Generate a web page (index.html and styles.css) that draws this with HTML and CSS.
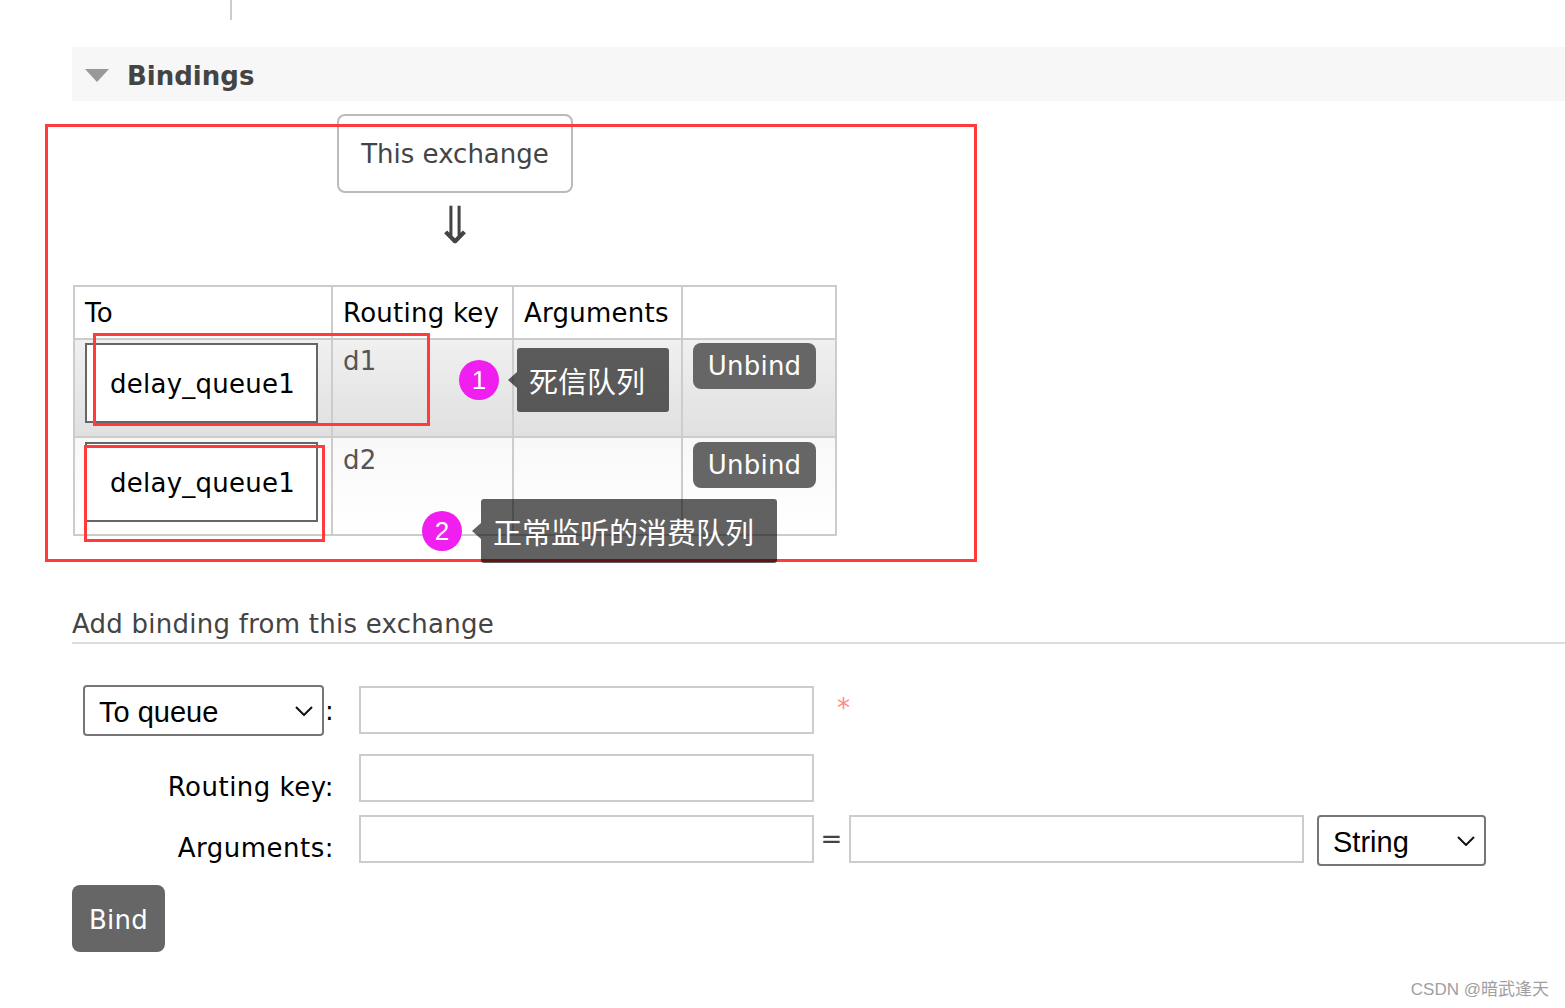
FILE: index.html
```html
<!DOCTYPE html>
<html lang="en">
<head>
<meta charset="utf-8">
<title>Bindings</title>
<link rel="stylesheet" href="styles.css">
</head>
<body>
<div class="topline"></div>
<div class="page">
  <div class="sec-head"><span class="tri"></span><h2>Bindings</h2></div>
  <div class="diagram">
    <div class="exch">This exchange</div>
    <div class="arrow">⇓</div>
    <table class="bt">
      <colgroup><col class="c1"><col class="c2"><col class="c3"><col class="c4"></colgroup>
      <thead>
        <tr><th>To</th><th>Routing key</th><th>Arguments</th><th></th></tr>
      </thead>
      <tbody>
        <tr class="odd">
          <td><div class="qbox">delay_queue1</div></td>
          <td class="rk">d1</td>
          <td></td>
          <td><button class="btn unbind" type="button">Unbind</button></td>
        </tr>
        <tr class="even">
          <td><div class="qbox">delay_queue1</div></td>
          <td class="rk">d2</td>
          <td></td>
          <td><button class="btn unbind" type="button">Unbind</button></td>
        </tr>
      </tbody>
    </table>
  </div>

  <h3 class="add">Add binding from this exchange</h3>

  <form class="form">
    <div class="frow r1">
      <div class="lbl lbl-sel">
        <span class="selwrap sel-q">
          <select class="sel"><option>To queue</option><option>To exchange</option></select>
          <svg class="chev" width="18" height="10" viewBox="0 0 18 10"><path d="M1 1 L9 9 L17 1" fill="none" stroke="#111" stroke-width="2"/></svg>
        </span><span class="colon">:</span>
      </div>
      <input class="inp" type="text">
      <span class="mand">*</span>
    </div>
    <div class="frow r2">
      <label class="lbl lbl-txt">Routing key:</label>
      <input class="inp" type="text">
    </div>
    <div class="frow r3">
      <label class="lbl lbl-txt lbl-args">Arguments:</label>
      <input class="inp" type="text">
      <span class="eq">=</span>
      <input class="inp" type="text">
      <span class="selwrap sel-s">
        <select class="sel"><option>String</option><option>Number</option><option>Boolean</option></select>
        <svg class="chev" width="18" height="10" viewBox="0 0 18 10"><path d="M1 1 L9 9 L17 1" fill="none" stroke="#111" stroke-width="2"/></svg>
      </span>
    </div>
    <button class="btn bind" type="button">Bind</button>
  </form>
</div>

<div class="ann rect rect-a"></div>
<div class="ann rect rect-b"></div>
<div class="ann rect rect-c"></div>
<div class="ann dot dot-1">1</div>
<div class="ann tip tip-1">死信队列</div>
<div class="ann dot dot-2">2</div>
<div class="ann tip tip-2">正常监听的消费队列</div>

<div class="watermark">CSDN @暗武逢天</div>
</body>
</html>
```
FILE: styles.css
```css
* { box-sizing: border-box; }
html, body { margin: 0; padding: 0; background: #fff; }
body {
  position: relative;
  width: 1565px;
  height: 1008px;
  overflow: hidden;
  font-family: "DejaVu Sans", Verdana, sans-serif;
  font-size: 26px;
  line-height: 32px;
  letter-spacing: 0.25px;
  color: #444;
}

.topline { margin-left: 230px; width: 2px; height: 20px; background: #ccc; }

.page { padding-left: 72px; padding-top: 27px; }

.sec-head {
  height: 54px;
  background: #f7f7f7;
  display: flex;
  align-items: center;
}
.tri {
  width: 0; height: 0;
  border-left: 12.5px solid transparent;
  border-right: 12.5px solid transparent;
  border-top: 13px solid #999;
  margin-left: 13px;
  margin-right: 18px;
  margin-top: 2px;
}
.sec-head h2 { margin: 0; padding-top: 3px; font-size: 26px; font-weight: bold; color: #444; letter-spacing: 0; }

.diagram {
  display: inline-flex;
  flex-direction: column;
  align-items: center;
  margin-top: 13px;
  margin-left: 1px;
}
.exch {
  width: 236px;
  height: 79px;
  border: 2px solid #bbb;
  border-radius: 8px;
  display: flex;
  align-items: center;
  justify-content: center;
  color: #444;
  letter-spacing: 0;
}
.arrow {
  height: 92px;
  padding-top: 7px;
  text-align: center;
  font-size: 51px;
  line-height: 51px;
  color: #444;
}

table.bt {
  border-collapse: collapse;
  table-layout: fixed;
  width: 762px;
  border: 2px solid #ccc;
}
.c1 { width: 258px; }
.c2 { width: 181px; }
.c3 { width: 169px; }
.c4 { width: 154px; }
.bt th, .bt td { border: 2px solid #ccc; }
.bt th {
  height: 53px;
  padding: 0 10px;
  text-align: left;
  font-weight: normal;
  color: #000;
  vertical-align: middle;
  background: #fff;
}
.bt td {
  padding: 3px 10px 13px 10px;
  vertical-align: top;
  line-height: 36px;
}
.bt tr.even td { padding-top: 4px; padding-bottom: 12px; }
.bt tr.odd td { background: linear-gradient(#f0f0f0, #e0e0e0); }
.bt tr.even td { background: linear-gradient(#f8f8f8, #ffffff); }
.bt td.rk { color: #555; }

.qbox {
  width: 233px;
  height: 80px;
  border: 2px solid #666;
  background: #fff;
  color: #000;
  padding-left: 23px;
  padding-top: 2px;
  display: flex;
  align-items: center;
  line-height: 32px;
}

.btn {
  border: none;
  background: #666;
  color: #fff;
  font-family: "DejaVu Sans", Verdana, sans-serif;
  font-size: 26px;
  letter-spacing: 0.25px;
  border-radius: 8px;
  padding: 0;
  display: inline-flex;
  align-items: center;
  justify-content: center;
  cursor: pointer;
}
.unbind { width: 123px; height: 46px; vertical-align: top; }
.bind { width: 93px; height: 67px; margin-top: 19px; padding-top: 2px; }

.add {
  margin: 72px 0 0;
  padding-bottom: 2px;
  font-size: 26px;
  font-weight: normal;
  line-height: 32px;
  color: #444;
  border-bottom: 2px solid #ddd;
}

.form { margin-top: 41px; }
.frow { display: flex; align-items: flex-start; }
.r2 { margin-top: 18px; }
.r3 { margin-top: 12px; }
.lbl {
  width: 262px;
  margin-right: 25px;
  flex: none;
  text-align: right;
  color: #000;
}
.lbl-sel { display: flex; justify-content: flex-end; align-items: center; height: 51px; }
.lbl-txt { padding-top: 17px; letter-spacing: 0.5px; }
.lbl-args { padding-top: 17px; }
.colon { color: #000; }

.selwrap { position: relative; display: inline-block; flex: none; }
.sel {
  -webkit-appearance: none;
  appearance: none;
  height: 51px;
  border: 2px solid #767676;
  border-radius: 4px;
  background: #fff;
  color: #000;
  font-family: "Liberation Sans", Arial, sans-serif;
  font-size: 29px;
  letter-spacing: 0;
  padding: 2px 0 0 14px;
  margin: 0;
  display: block;
}
.sel-q { margin-right: 1px; }
.sel-q .sel { width: 241px; }
.sel-s { margin-left: 13px; }
.sel-s .sel { width: 169px; }
.chev { position: absolute; right: 11px; top: 21px; pointer-events: none; }

.inp {
  width: 455px;
  height: 48px;
  border: 2px solid #ccc;
  background: #fff;
  margin: 0;
  padding: 0 6px;
  font-size: 26px;
  flex: none;
}
.r1 .inp { margin-top: 1px; }
.mand { color: #f88; margin-left: 23px; margin-top: 7px; }
.eq { width: 35px; text-align: center; line-height: 48px; color: #444; flex: none; }

/* annotation overlay */
.ann { position: absolute; }
.rect { border: 3px solid #ff3b3b; }
.rect-a { left: 45px; top: 124px; width: 932px; height: 438px; }
.rect-b { left: 93px; top: 333px; width: 337px; height: 93px; }
.rect-c { left: 84px; top: 445px; width: 241px; height: 97px; }

.dot {
  width: 40px; height: 40px;
  border-radius: 50%;
  background: #f01ff0;
  color: #fff;
  font-family: "Liberation Sans", Arial, sans-serif;
  font-size: 26px;
  line-height: 40px;
  text-align: center;
  letter-spacing: 0;
}
.dot-1 { left: 459px; top: 360px; }
.dot-2 { left: 422px; top: 511px; }

.tip {
  height: 64px;
  background: rgba(0, 0, 0, 0.62);
  border-radius: 3px;
  color: #fff;
  font-family: "Noto Sans CJK SC", sans-serif;
  font-size: 29px;
  line-height: 64px;
  letter-spacing: 0;
  padding-left: 12px;
  white-space: nowrap;
}
.tip::before {
  content: "";
  position: absolute;
  left: -9px;
  top: 24px;
  border-top: 8px solid transparent;
  border-bottom: 8px solid transparent;
  border-right: 9px solid rgba(0, 0, 0, 0.62);
}
.tip-1 { left: 517px; top: 348px; width: 152px; }
.tip-2 { left: 481px; top: 499px; width: 296px; }

.watermark {
  position: absolute;
  right: 16px;
  bottom: 8px;
  font-family: "Liberation Sans", "Noto Sans CJK SC", sans-serif;
  font-size: 17px;
  line-height: 20px;
  letter-spacing: 0;
  color: #a0a0a0;
}
```
